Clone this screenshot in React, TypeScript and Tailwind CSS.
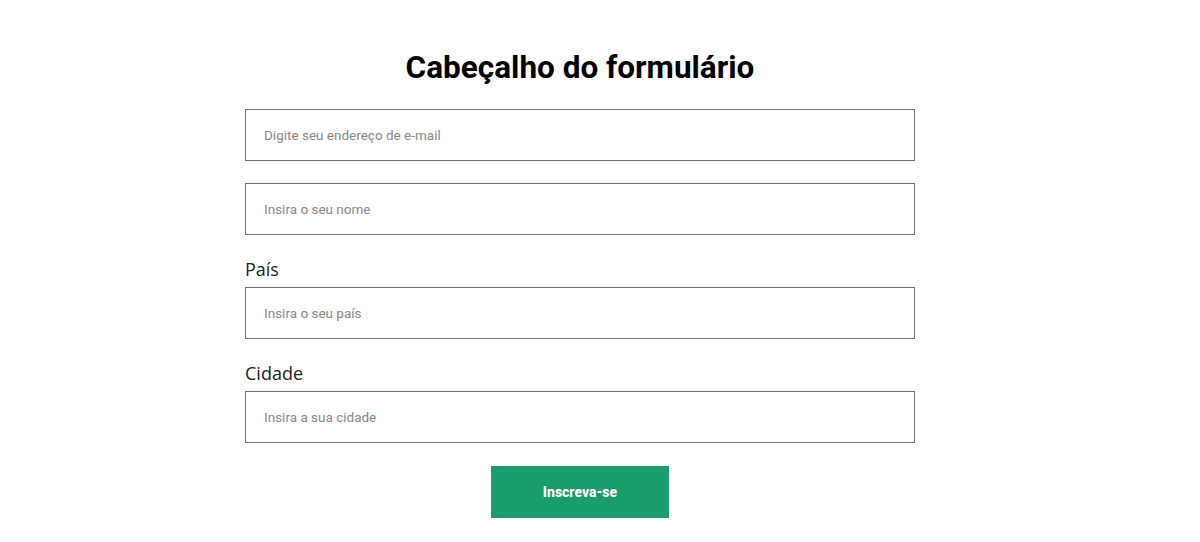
import React from "react";

const FIELDS_TOP = [
  { id: "email", placeholder: "Digite seu endereço de e-mail" },
  { id: "nome", placeholder: "Insira o seu nome" },
];

const FIELDS_LABELED = [
  { id: "pais", label: "País", placeholder: "Insira o seu país" },
  { id: "cidade", label: "Cidade", placeholder: "Insira a sua cidade" },
];

function TextField({ id, placeholder }: { id: string; placeholder: string }) {
  return (
    <input
      id={id}
      type="text"
      placeholder={placeholder}
      className="block h-[52px] w-full border border-[#6f6f6f] bg-white px-[18px] text-[13.5px] text-[#333] outline-none placeholder:text-[#888] [font-family:Roboto,'Liberation_Sans',sans-serif]"
    />
  );
}

export default function App() {
  return (
    <div className="min-h-[542px] bg-white pr-[40px] pt-[50px]">
      <form className="mx-auto flex w-[670px] flex-col" onSubmit={(e) => e.preventDefault()}>
        <h1 className="mb-[23px] text-center text-[31.5px] font-bold leading-[36px] text-black [font-family:Roboto,'Liberation_Sans',sans-serif]">
          Cabeçalho do formulário
        </h1>

        <div className="flex flex-col gap-[22px]">
          {FIELDS_TOP.map((f) => (
            <TextField key={f.id} id={f.id} placeholder={f.placeholder} />
          ))}
        </div>

        {FIELDS_LABELED.map((f) => (
          <div key={f.id} className="mt-[22px] flex flex-col">
            <label
              htmlFor={f.id}
              className="mb-[6px] text-[18px] leading-[24px] text-[#222] [font-family:'Open_Sans','Noto_Sans',sans-serif]"
            >
              {f.label}
            </label>
            <TextField id={f.id} placeholder={f.placeholder} />
          </div>
        ))}

        <button
          type="submit"
          className="mx-auto mt-[23px] h-[52px] w-[178px] bg-[#1b9c6b] text-[14px] font-extrabold text-white [font-family:Roboto,'Liberation_Sans',sans-serif]"
        >
          Inscreva-se
        </button>
      </form>
    </div>
  );
}
